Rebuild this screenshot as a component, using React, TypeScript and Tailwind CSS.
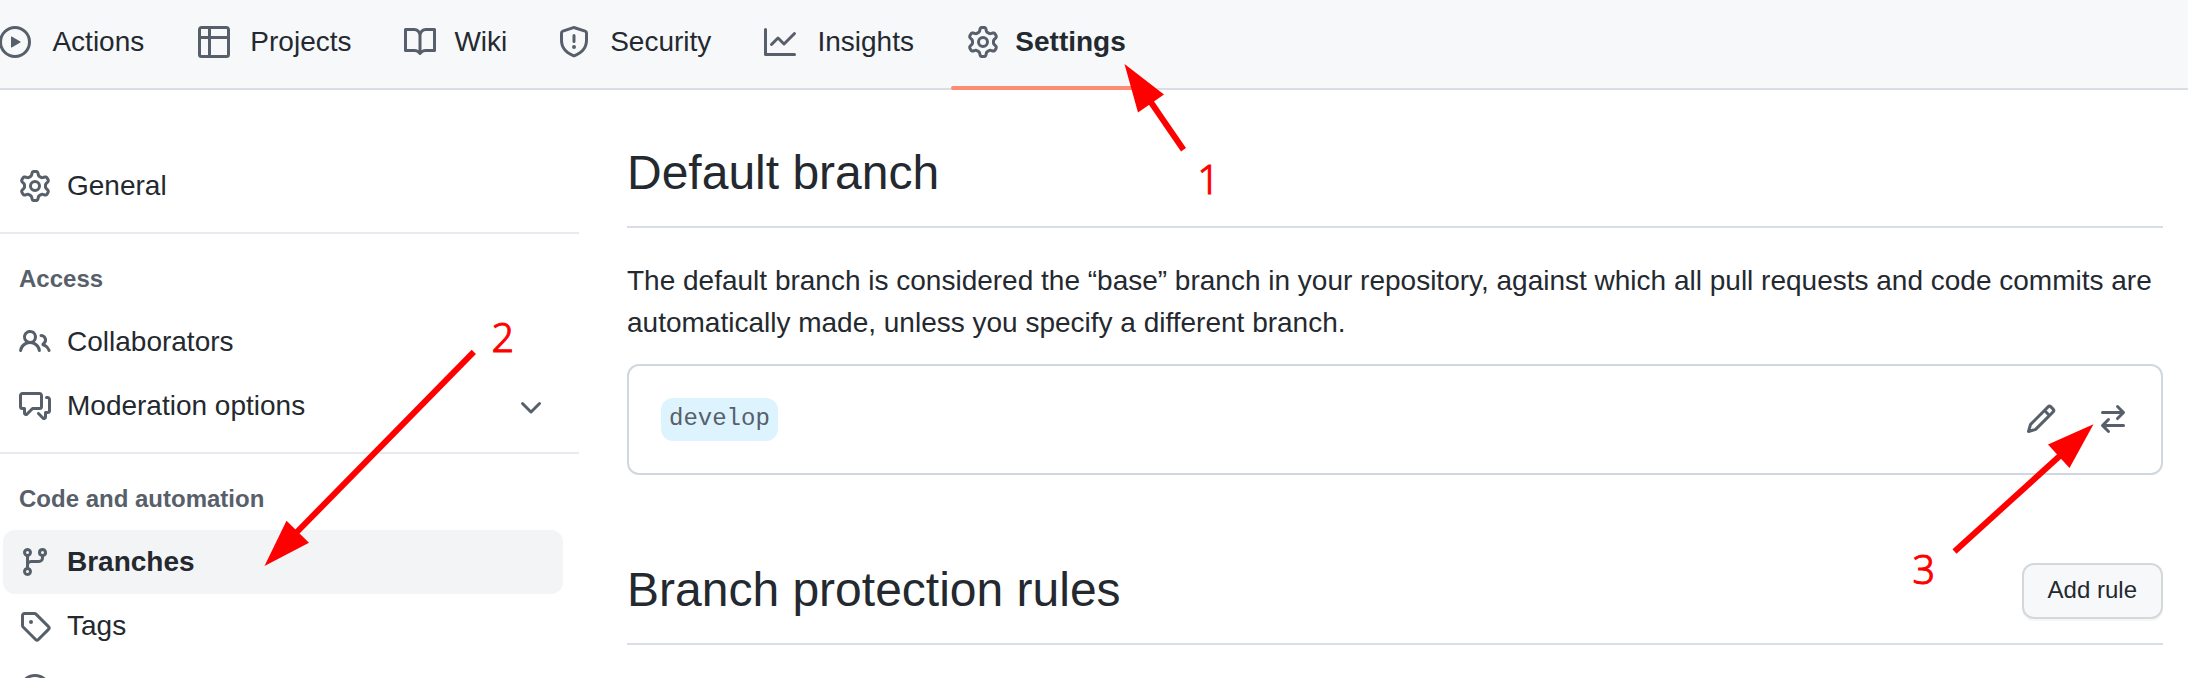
import React from "react";

const paths = {
  play: "M1.5 8a6.5 6.5 0 1113 0 6.5 6.5 0 01-13 0zM8 0a8 8 0 100 16A8 8 0 008 0zM6.379 5.227A.25.25 0 006 5.442v5.117a.25.25 0 00.379.214l4.264-2.559a.25.25 0 000-.428L6.379 5.227z",
  table: "M0 1.75C0 .784.784 0 1.75 0h12.5C15.216 0 16 .784 16 1.75v12.5A1.75 1.75 0 0 1 14.25 16H1.75A1.75 1.75 0 0 1 0 14.25ZM6.5 6.5v8h7.75a.25.25 0 0 0 .25-.25V6.5Zm8-1.5V1.75a.25.25 0 0 0-.25-.25H6.5V5Zm-13 1.5v7.75c0 .138.112.25.25.25H5v-8ZM5 5V1.5H1.75a.25.25 0 0 0-.25.25V5Z",
  book: "M0 1.75A.75.75 0 0 1 .75 1h4.253c1.227 0 2.317.59 3 1.501A3.743 3.743 0 0 1 11.006 1h4.245a.75.75 0 0 1 .75.75v10.5a.75.75 0 0 1-.75.75h-4.507a2.25 2.25 0 0 0-1.591.659l-.622.621a.75.75 0 0 1-1.06 0l-.622-.621A2.25 2.25 0 0 0 5.258 13H.75a.75.75 0 0 1-.75-.75Zm7.251 10.324.004-5.073-.002-2.253A2.25 2.25 0 0 0 5.003 2.5H1.5v9h3.757a3.75 3.75 0 0 1 1.994.574ZM8.755 4.75l-.004 7.322a3.752 3.752 0 0 1 1.992-.572H14.5v-9h-3.495a2.25 2.25 0 0 0-2.25 2.25Z",
  shield: "M7.467.133a1.748 1.748 0 0 1 1.066 0l5.25 1.68A1.75 1.75 0 0 1 15 3.48V7c0 1.566-.32 3.182-1.303 4.682-.983 1.498-2.585 2.813-5.032 3.855a1.697 1.697 0 0 1-1.33 0c-2.447-1.042-4.049-2.357-5.032-3.855C1.32 10.182 1 8.566 1 7V3.48a1.755 1.755 0 0 1 1.217-1.667Zm.61 1.429a.25.25 0 0 0-.153 0l-5.25 1.68a.25.25 0 0 0-.174.238V7c0 1.358.275 2.666 1.057 3.86.784 1.194 2.121 2.34 4.366 3.297a.196.196 0 0 0 .154 0c2.245-.956 3.582-2.104 4.366-3.298C13.225 9.666 13.5 8.36 13.5 7V3.48a.251.251 0 0 0-.174-.237l-5.25-1.68ZM8.75 4.75v3a.75.75 0 0 1-1.5 0v-3a.75.75 0 0 1 1.5 0ZM9 10.5a1 1 0 1 1-2 0 1 1 0 0 1 2 0Z",
  graph: "M1.5 1.75V13.5h13.75a.75.75 0 0 1 0 1.5H.75a.75.75 0 0 1-.75-.75V1.75a.75.75 0 0 1 1.5 0Zm14.28 2.53-5.25 5.25a.75.75 0 0 1-1.06 0L7 7.06 4.28 9.78a.751.751 0 0 1-1.042-.018.751.751 0 0 1-.018-1.042l3.25-3.25a.75.75 0 0 1 1.06 0L10 7.94l4.72-4.72a.751.751 0 0 1 1.042.018.751.751 0 0 1 .018 1.042Z",
  gear: "M8 0a8.2 8.2 0 0 1 .701.031C9.444.095 9.99.645 10.16 1.29l.288 1.107c.018.066.079.158.212.224.231.114.454.243.668.386.123.082.233.09.299.071l1.103-.303c.644-.176 1.392.021 1.82.63.27.385.506.792.704 1.218.315.675.111 1.422-.364 1.891l-.814.806c-.049.048-.098.147-.088.294.016.257.016.515 0 .772-.01.147.038.246.088.294l.814.806c.475.469.679 1.216.364 1.891a7.977 7.977 0 0 1-.704 1.217c-.428.61-1.176.807-1.82.63l-1.102-.302c-.067-.019-.177-.011-.3.071a5.909 5.909 0 0 1-.668.386c-.133.066-.194.158-.211.224l-.29 1.106c-.168.646-.715 1.196-1.458 1.26a8.006 8.006 0 0 1-1.402 0c-.743-.064-1.289-.614-1.458-1.26l-.289-1.106c-.018-.066-.079-.158-.212-.224a5.738 5.738 0 0 1-.668-.386c-.123-.082-.233-.09-.299-.071l-1.103.303c-.644.176-1.392-.021-1.82-.63a8.12 8.12 0 0 1-.704-1.218c-.315-.675-.111-1.422.363-1.891l.815-.806c.05-.048.098-.147.088-.294a6.214 6.214 0 0 1 0-.772c.01-.147-.038-.246-.088-.294l-.815-.806C.635 6.045.431 5.298.746 4.623a7.92 7.92 0 0 1 .704-1.217c.428-.61 1.176-.807 1.82-.63l1.102.302c.067.019.177.011.3-.071.214-.143.437-.272.668-.386.133-.066.194-.158.211-.224l.29-1.106C6.009.645 6.556.095 7.299.03 7.53.01 7.764 0 8 0Zm-.571 1.525c-.036.003-.108.036-.137.146l-.289 1.105c-.147.561-.549.967-.998 1.189-.173.086-.34.183-.5.29-.417.278-.97.423-1.529.27l-1.103-.303c-.109-.03-.175.016-.195.045-.22.312-.412.644-.573.99-.014.031-.021.11.059.19l.815.806c.411.406.562.957.53 1.456a4.709 4.709 0 0 0 0 .582c.032.499-.119 1.05-.53 1.456l-.815.806c-.081.08-.073.159-.059.19.162.346.353.677.573.989.02.03.085.076.195.046l1.102-.303c.56-.153 1.113-.008 1.53.27.161.107.328.204.501.29.447.222.85.629.997 1.189l.289 1.105c.029.109.101.143.137.146a6.6 6.6 0 0 0 1.142 0c.036-.003.108-.036.137-.146l.289-1.105c.147-.561.549-.967.998-1.189.173-.086.34-.183.5-.29.417-.278.97-.423 1.529-.27l1.103.303c.109.029.175-.016.195-.045.22-.313.411-.644.573-.99.014-.031.021-.11-.059-.19l-.815-.806c-.411-.406-.562-.957-.53-1.456a4.709 4.709 0 0 0 0-.582c-.032-.499.119-1.05.53-1.456l.815-.806c.081-.08.073-.159.059-.19a6.464 6.464 0 0 0-.573-.989c-.02-.03-.085-.076-.195-.046l-1.102.303c-.56.153-1.113.008-1.53-.27a4.44 4.44 0 0 0-.501-.29c-.447-.222-.85-.629-.997-1.189l-.289-1.105c-.029-.11-.101-.143-.137-.146a6.6 6.6 0 0 0-1.142 0ZM11 8a3 3 0 1 1-6 0 3 3 0 0 1 6 0ZM9.5 8a1.5 1.5 0 1 0-3.001.001A1.5 1.5 0 0 0 9.5 8Z",
  people: "M2 5.5a3.5 3.5 0 1 1 5.898 2.549 5.508 5.508 0 0 1 3.034 4.084.75.75 0 1 1-1.482.235 4 4 0 0 0-7.9 0 .75.75 0 0 1-1.482-.236A5.507 5.507 0 0 1 3.102 8.05 3.493 3.493 0 0 1 2 5.5ZM11 4a3.001 3.001 0 0 1 2.22 5.018 5.01 5.01 0 0 1 2.56 3.012.749.749 0 0 1-.885.954.752.752 0 0 1-.549-.514 3.507 3.507 0 0 0-2.522-2.372.75.75 0 0 1-.574-.73v-.352a.75.75 0 0 1 .416-.672A1.5 1.5 0 0 0 11 5.5.75.75 0 0 1 11 4Zm-5.5-.5a2 2 0 1 0-.001 3.999A2 2 0 0 0 5.5 3.5Z",
  discussion: "M1.75 1h8.5c.966 0 1.75.784 1.75 1.75v5.5A1.75 1.75 0 0 1 10.25 10H7.061l-2.574 2.573A1.458 1.458 0 0 1 2 11.543V10h-.25A1.75 1.75 0 0 1 0 8.25v-5.5C0 1.784.784 1 1.75 1ZM1.5 2.75v5.5c0 .138.112.25.25.25h1a.75.75 0 0 1 .75.75v2.19l2.72-2.72a.749.749 0 0 1 .53-.22h3.5a.25.25 0 0 0 .25-.25v-5.5a.25.25 0 0 0-.25-.25h-8.5a.25.25 0 0 0-.25.25Zm13 2a.25.25 0 0 0-.25-.25h-.5a.75.75 0 0 1 0-1.5h.5c.966 0 1.75.784 1.75 1.75v5.5A1.75 1.75 0 0 1 14.25 12H14v1.543a1.458 1.458 0 0 1-2.487 1.03L9.22 12.28a.749.749 0 0 1 .326-1.275.749.749 0 0 1 .734.215l2.22 2.22v-2.19a.75.75 0 0 1 .75-.75h1a.25.25 0 0 0 .25-.25Z",
  chevron: "M12.78 6.22a.75.75 0 010 1.06l-4.25 4.25a.75.75 0 01-1.06 0L3.22 7.28a.75.75 0 011.06-1.06L8 9.94l3.72-3.72a.75.75 0 011.06 0z",
  branch: "M9.5 3.25a2.25 2.25 0 1 1 3 2.122V6A2.5 2.5 0 0 1 10 8.5H6a1 1 0 0 0-1 1v1.128a2.251 2.251 0 1 1-1.5 0V5.372a2.25 2.25 0 1 1 1.5 0v1.836A2.493 2.493 0 0 1 6 7h4a1 1 0 0 0 1-1v-.628A2.25 2.25 0 0 1 9.5 3.25Zm-6 0a.75.75 0 1 0 1.5 0 .75.75 0 0 0-1.5 0Zm8.25-.75a.75.75 0 1 0 0 1.5.75.75 0 0 0 0-1.5ZM4.25 12a.75.75 0 1 0 0 1.5.75.75 0 0 0 0-1.5Z",
  tag: "M1 7.775V2.75C1 1.784 1.784 1 2.75 1h5.025c.464 0 .91.184 1.238.513l6.25 6.25a1.75 1.75 0 0 1 0 2.474l-5.026 5.026a1.75 1.75 0 0 1-2.474 0l-6.25-6.25A1.752 1.752 0 0 1 1 7.775Zm1.5 0c0 .066.026.13.073.177l6.25 6.25a.25.25 0 0 0 .354 0l5.025-5.025a.25.25 0 0 0 0-.354l-6.25-6.25a.25.25 0 0 0-.177-.073H2.75a.25.25 0 0 0-.25.25ZM6 5a1 1 0 1 1 0 2 1 1 0 0 1 0-2Z",
  circle: "M1.5 8a6.5 6.5 0 1113 0 6.5 6.5 0 01-13 0zM8 0a8 8 0 100 16A8 8 0 008 0z",
  pencil: "M11.013 1.427a1.75 1.75 0 0 1 2.474 0l1.086 1.086a1.75 1.75 0 0 1 0 2.474l-8.61 8.61c-.21.21-.47.364-.756.445l-3.251.93a.75.75 0 0 1-.927-.928l.929-3.25c.081-.286.235-.547.445-.758l8.61-8.61Zm.176 4.823L9.75 4.81l-6.286 6.287a.253.253 0 0 0-.064.108l-.558 1.953 1.953-.558a.253.253 0 0 0 .108-.064Zm1.238-3.763a.25.25 0 0 0-.354 0L10.811 3.75l1.439 1.44 1.263-1.263a.25.25 0 0 0 0-.354Z",
  swap: "M5.22 14.78a.75.75 0 0 0 1.06-1.06L4.56 12h8.69a.75.75 0 0 0 0-1.5H4.56l1.72-1.72a.75.75 0 0 0-1.06-1.06l-3 3a.75.75 0 0 0 0 1.06l3 3Zm5.56-6.5a.75.75 0 1 1-1.06-1.06l1.72-1.72H2.75a.75.75 0 0 1 0-1.5h8.69L9.72 2.28a.75.75 0 0 1 1.06-1.06l3 3a.75.75 0 0 1 0 1.06l-3 3Z",
};

type IconName = keyof typeof paths;

function Icon({ name }: { name: IconName }) {
  return (
    <svg viewBox="0 0 16 16" fillRule="evenodd" className="size-8 shrink-0 overflow-visible fill-[#57606a]">
      <path d={paths[name]} />
    </svg>
  );
}

/* The bold ::after copy keeps each tab as wide as its selected state. */
function Tab({ icon, label, selected = false }: { icon: IconName; label: string; selected?: boolean }) {
  return (
    <a className="relative flex h-[90px] items-center gap-4 px-4 pb-1.5">
      <Icon name={icon} />
      <span
        data-content={label}
        className={
          "flex h-[42px] flex-col items-center leading-[42px] after:invisible after:h-0 after:overflow-hidden after:font-bold after:content-[attr(data-content)] " +
          (selected ? "font-bold" : "")
        }
      >
        {label}
      </span>
      {selected && <span className="absolute inset-x-0 bottom-0 h-1 rounded-[2px] bg-[#fd8c73]" />}
    </a>
  );
}

function NavRow({ icon, label, selected = false, expandable = false }: { icon: IconName; label?: string; selected?: boolean; expandable?: boolean }) {
  return (
    <a
      className={
        "ml-[3px] flex h-16 w-[560px] shrink-0 items-center gap-4 rounded-xl px-4 " + (selected ? "bg-[#f3f4f6] font-bold" : "")
      }
    >
      <Icon name={icon} />
      <span className="grow">{label}</span>
      {expandable && <Icon name="chevron" />}
    </a>
  );
}

function Section({ title }: { title: string }) {
  return (
    <>
      <div className="mt-[14px] mb-4 h-0.5 shrink-0 bg-[#e7ebef]" />
      <h3 className="h-[60px] shrink-0 pt-[11px] pl-[19px] text-2xl leading-[36px] font-bold text-[#57606a]">{title}</h3>
    </>
  );
}

function Callouts() {
  return (
    <svg viewBox="0 0 2188 678" className="pointer-events-none absolute inset-0 h-[678px] w-[2188px] fill-[#ff0000]">
      <g stroke="#ff0000" strokeWidth="6">
        <path d="M1183.5 149.8 1148 98" />
        <path d="M473.8 351.8 294 535" />
        <path d="M1954.5 551.5 2063 453" />
      </g>
      <path d="M1124.5 64 1164 94.5 1138 112.5Z" />
      <path d="M264.5 566 286.5 520.7 309 542.7Z" />
      <path d="M2093.5 424.3 2069.5 468 2048 444.5Z" />
      <g fontFamily="'Noto Sans', sans-serif" fontSize="39.5" fontWeight="300" stroke="#ff0000" strokeWidth="1">
        <text x="1197.3" y="193.6">1</text>
        <text x="491.6" y="351.5">2</text>
        <text x="1912.4" y="584">3</text>
      </g>
    </svg>
  );
}

export default function App() {
  return (
    <div className="relative flex h-[678px] w-[2188px] flex-col overflow-hidden bg-white font-['Liberation_Sans',Arial,sans-serif] text-[28px] leading-[42px] text-[#24292f]">
      <nav className="flex h-[90px] shrink-0 border-b-2 border-[#d8dee4] bg-[#f6f8fa]">
        <div className="-ml-[17px] flex gap-4">
          <Tab icon="play" label="Actions" />
          <Tab icon="table" label="Projects" />
          <Tab icon="book" label="Wiki" />
          <Tab icon="shield" label="Security" />
          <Tab icon="graph" label="Insights" />
          <Tab icon="gear" label="Settings" selected />
        </div>
      </nav>

      <div className="flex min-h-0 grow gap-12">
        <aside className="flex w-[579px] shrink-0 flex-col overflow-hidden pt-16">
          <NavRow icon="gear" label="General" />
          <Section title="Access" />
          <NavRow icon="people" label="Collaborators" />
          <NavRow icon="discussion" label="Moderation options" expandable />
          <Section title="Code and automation" />
          <NavRow icon="branch" label="Branches" selected />
          <NavRow icon="tag" label="Tags" />
          <NavRow icon="circle" />
        </aside>

        <main className="w-[1536px] shrink-0 pt-[47px]">
          <h2 className="border-b-2 border-[#d8dee4] pb-[17px] text-5xl leading-[72px]">Default branch</h2>
          <p className="mt-8">
            The default branch is considered the “base” branch in your repository, against which all pull requests and
            code commits are automatically made, unless you specify a different branch.
          </p>
          <div className="mt-5 flex h-[111px] items-center rounded-xl border-2 border-[#d0d7de] px-8">
            <code className="h-[43px] rounded-xl bg-[#ddf4ff] px-2 font-['Liberation_Mono',monospace] text-2xl leading-[42px] text-[#57606a]">
              develop
            </code>
            <div className="ml-auto flex gap-10 pb-px">
              <Icon name="pencil" />
              <Icon name="swap" />
            </div>
          </div>
          <div className="mt-[79px] flex h-[91px] items-start justify-between border-b-2 border-[#d8dee4]">
            <h2 className="text-5xl leading-[72px]">Branch protection rules</h2>
            <button className="mt-[9px] flex h-14 rounded-xl border-2 border-[#d5d8da] bg-[#f6f8fa] px-6 text-2xl leading-[50px] shadow-[0_2px_0_rgba(27,31,36,0.04)]">
              Add rule
            </button>
          </div>
        </main>
      </div>
      <Callouts />
    </div>
  );
}
